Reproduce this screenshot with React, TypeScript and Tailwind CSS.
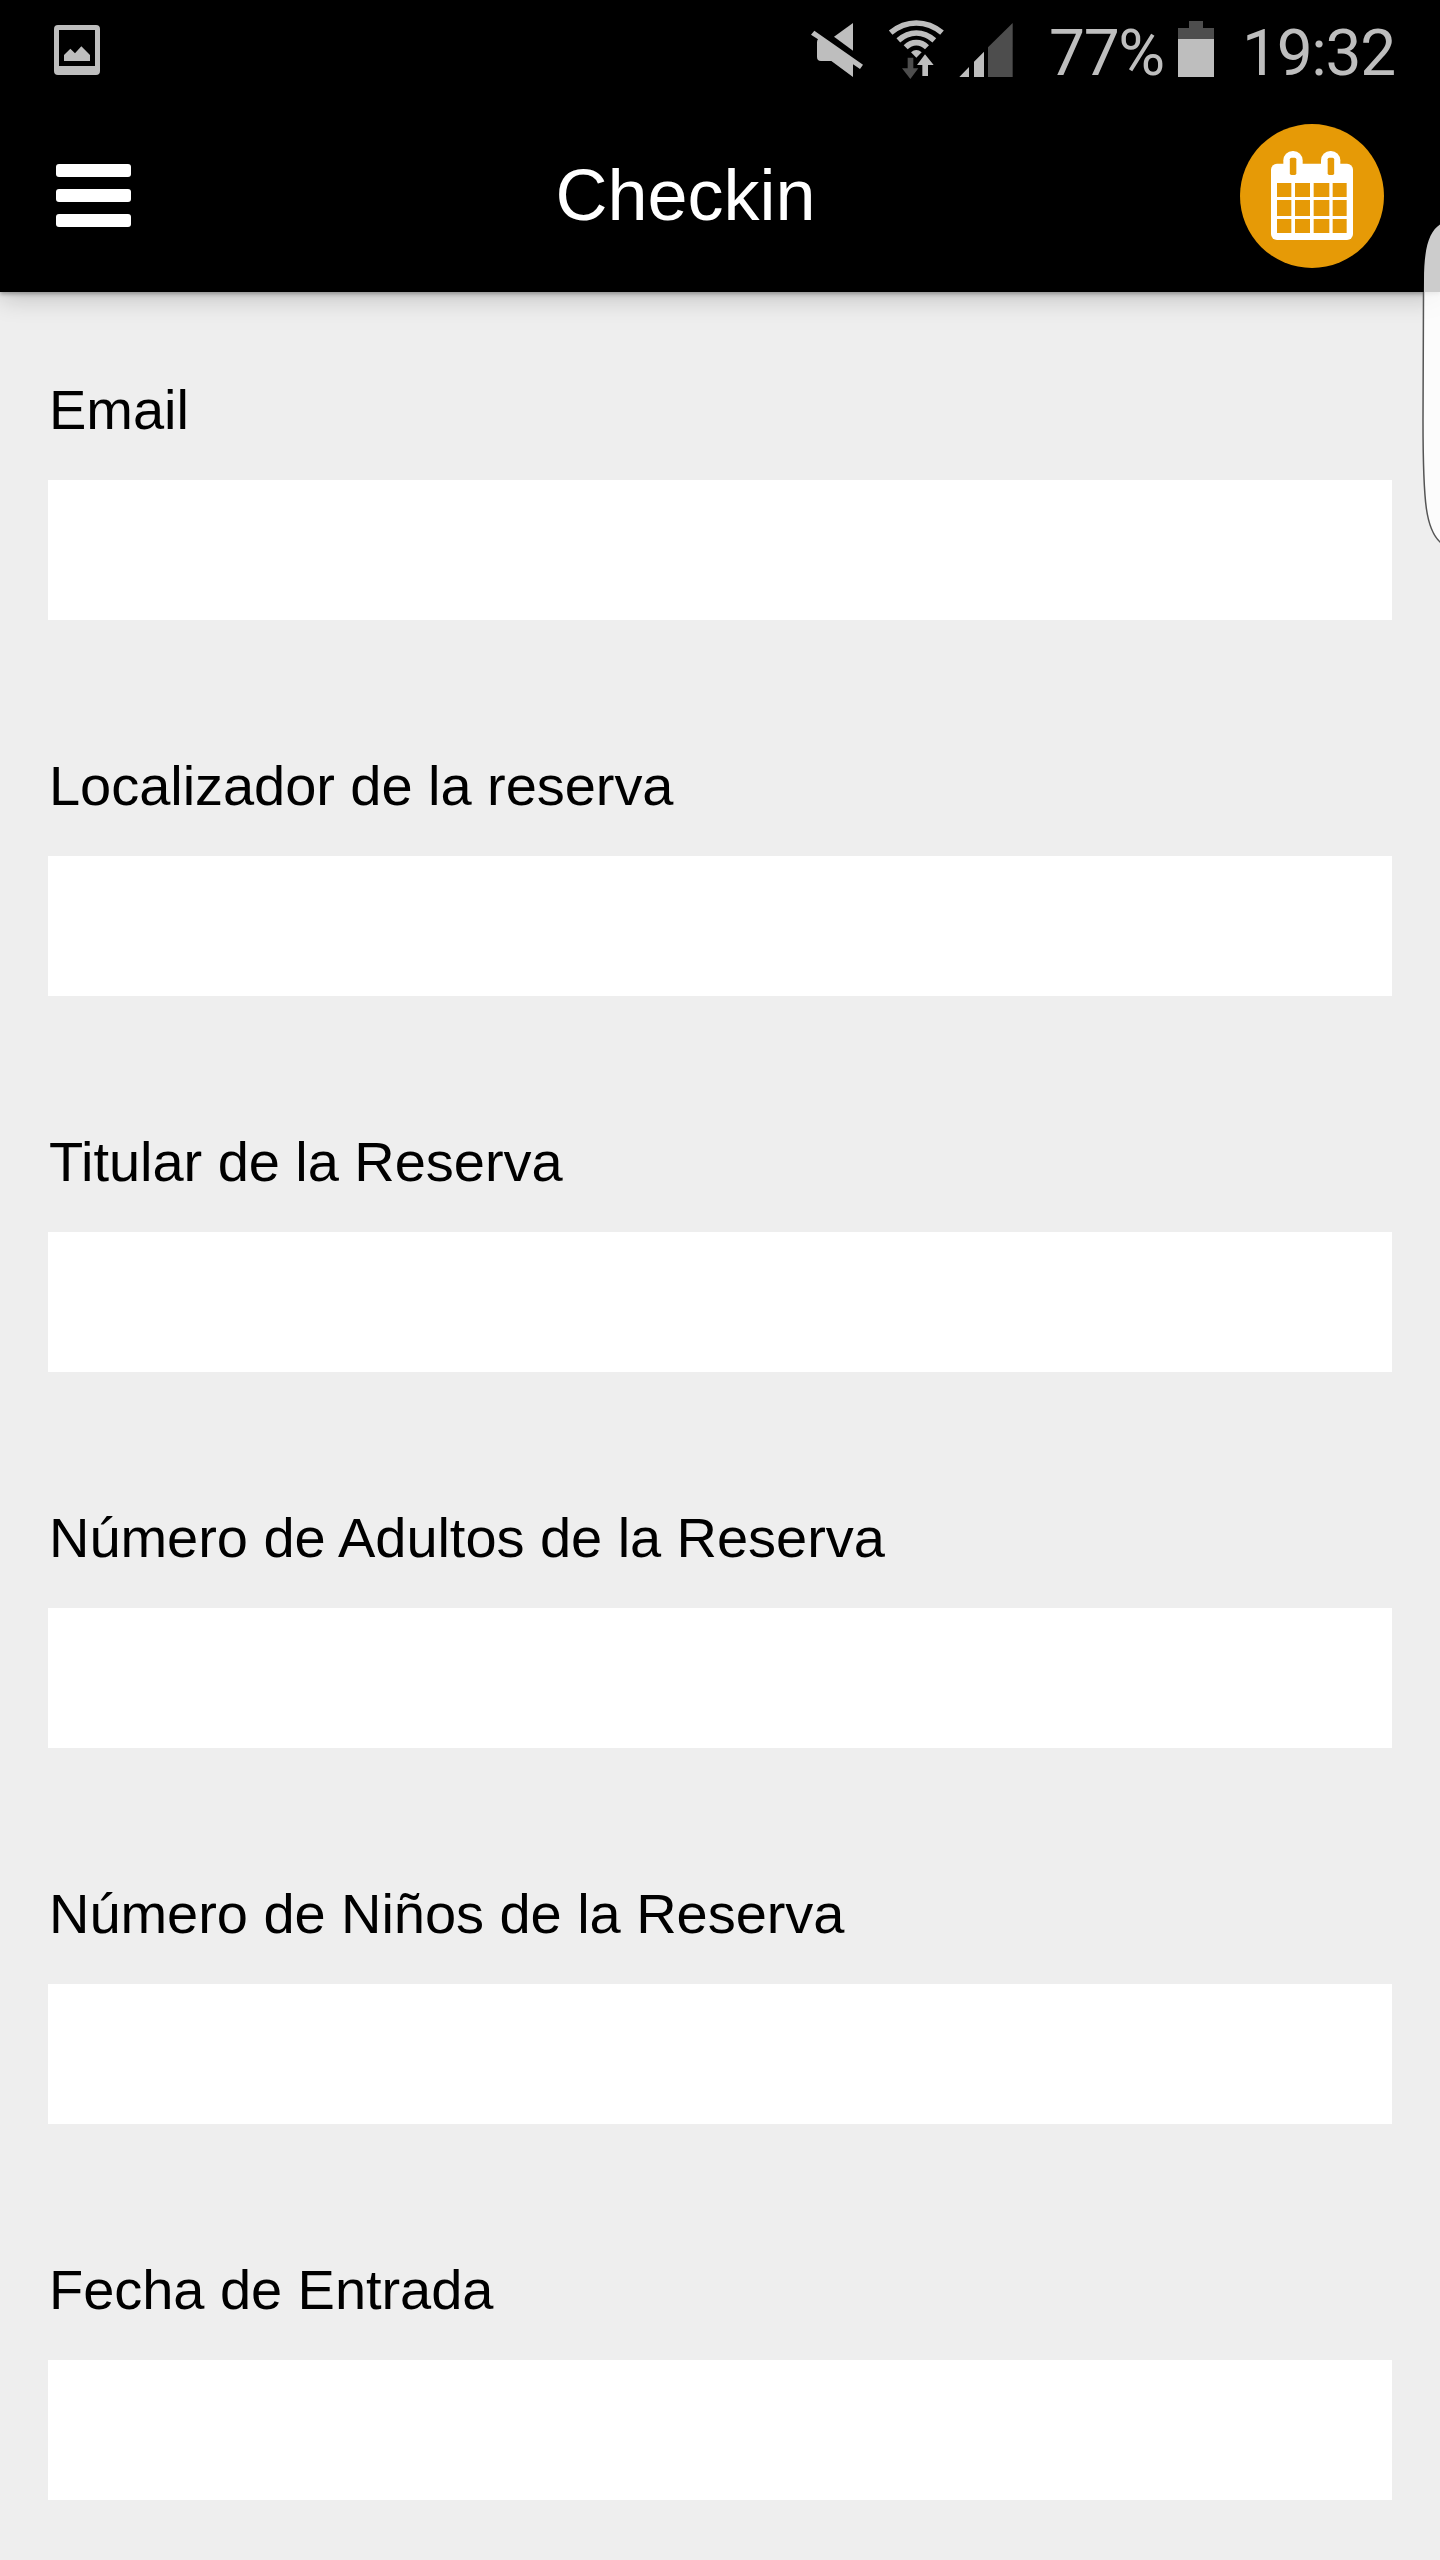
const fields = [
  { id: "email", label: "Email" },
  { id: "locator", label: "Localizador de la reserva" },
  { id: "holder", label: "Titular de la Reserva" },
  { id: "adults", label: "Número de Adultos de la Reserva" },
  { id: "children", label: "Número de Niños de la Reserva" },
  { id: "checkin-date", label: "Fecha de Entrada" },
];

const PictureIcon = () => (
  <svg viewBox="162 0 138 288" className="h-24 w-[46px]">
    <path
      fillRule="evenodd"
      fill="#bebebe"
      d="M174 75H288Q300 75 300 87V213Q300 225 288 225H174Q162 225 162 213V87Q162 75 174 75ZM177 90V198H285V90Z"
    />
    <path fill="#bebebe" d="M192 183V165L211 146L225 160L244 139L270 165V183Z" />
  </svg>
);

const MuteIcon = () => (
  <svg viewBox="60 0 162 288" className="h-24 w-[54px]">
    <path fill="#bebebe" d="M189 69V152L132 110Z" />
    <path
      fill="#bebebe"
      d="M73 92L219 194L210 207L189 193V231L124 183H93Q81 183 81 171V127Q81 121 84 118L63 104Z"
    />
  </svg>
);

const WifiIcon = () => (
  <svg viewBox="294 0 168 288" className="h-24 w-14">
    <g fill="none" stroke="#bebebe" strokeWidth="17">
      <path d="M302 98Q337 69 379 69T456 98" />
      <path d="M325 121Q350 99 379 99T433 121" />
      <path d="M347 142Q361 128 379 128T411 142" />
    </g>
    <path fill="#bebebe" d="M363 157Q379 143 395 157L379 173Z" />
    <path fill="#4d4d4d" d="M353 173H370V205H385L361 237L336 205H353Z" />
    <path
      fill="#bebebe"
      stroke="#000"
      strokeWidth="6"
      paintOrder="stroke"
      d="M405 163L431 195H414V228H397V195H381Z"
    />
  </svg>
);

const SignalIcon = () => (
  <svg viewBox="504 0 168 288" className="h-24 w-14">
    <path fill="#bebebe" d="M508 231L537 201V231ZM552 231V185L582 155V231Z" />
    <path fill="#4d4d4d" d="M594 231V142L668 69V231Z" />
  </svg>
);

const BatteryIcon = () => (
  <svg viewBox="444 0 108 288" className="h-24 w-9">
    <path fill="#4d4d4d" d="M477 63H519V84H552V117H444V84H477Z" />
    <path fill="#bebebe" d="M444 117H552V231H444Z" />
  </svg>
);

const CalendarIcon = () => (
  <svg viewBox="120 72 432 432" className="size-full">
    <rect x="213" y="191" width="246" height="229" rx="18" fill="#fff" />
    <rect x="250" y="153" width="58" height="91" rx="28" fill="#fff" />
    <rect x="363" y="153" width="58" height="91" rx="28" fill="#fff" />
    <g fill="#e69a06">
      <rect x="269.500" y="173" width="19.500" height="52" rx="5" />
      <rect x="383" y="173" width="19.500" height="52" rx="5" />
      <path d="M231 249h43v42h-43zM285 249h45v42h-45zM341 249h47v42h-47zM398 249h42v42h-42z" />
      <path d="M231 300h43v48h-43zM285 300h45v48h-45zM341 300h47v48h-47zM398 300h42v48h-42z" />
      <path d="M231 357h43v42h-43zM285 357h45v42h-45zM341 357h47v42h-47zM398 357h42v42h-42z" />
    </g>
  </svg>
);

const StatusBar = () => (
  <div className="flex h-24 items-center pl-[54px] font-['Roboto',sans-serif] text-[64px] leading-[96px] tracking-[-1.3px] text-[#bebebe]">
    <PictureIcon />
    <div className="ml-[710px] flex">
      <MuteIcon />
      <div className="ml-6">
        <WifiIcon />
      </div>
      <div className="ml-3.5">
        <SignalIcon />
      </div>
    </div>
    <span className="ml-[35px] w-[129px] pt-3 whitespace-nowrap">77%</span>
    <BatteryIcon />
    <span className="ml-[28px] pt-3 whitespace-nowrap">19:32</span>
  </div>
);

const TopBar = () => (
  <div className="flex h-[196px] items-center justify-between px-14 pt-1">
    <button type="button" aria-label="Menu" className="mb-px flex w-[75px] flex-col gap-3">
      <span className="h-[13px] rounded-[3px] bg-white" />
      <span className="h-[13px] rounded-[3px] bg-white" />
      <span className="h-[13px] rounded-[3px] bg-white" />
    </button>
    <h1 className="mb-0.5 text-[72px] leading-[82px] text-white">Checkin</h1>
    <button type="button" aria-label="Calendar" className="size-36 rounded-full bg-[#e69a06]">
      <CalendarIcon />
    </button>
  </div>
);

// Edge panel handle that sits over the right side of the screen
const EdgeHandle = () => (
  <svg viewBox="0 0 20 330" className="absolute top-[220px] right-0 h-[330px] w-5">
    <path
      fill="#fff"
      fillOpacity="0.8"
      d="M21 4C9 11 4 28 4 60L3 200C3 285 6 310 21 323Z"
    />
    <path
      fill="none"
      stroke="#555"
      strokeWidth="1.500"
      d="M3.500 72L3 200C3 285 6 310 21 323"
    />
  </svg>
);

export default function App() {
  return (
    <div className="relative h-[2560px] w-[1440px] overflow-hidden bg-[#eeeeee] font-['Liberation_Sans',Arial,sans-serif]">
      <header className="relative bg-black shadow-[0_2px_4px_rgba(0,0,0,0.3),0_6px_24px_rgba(0,0,0,0.2)]">
        <StatusBar />
        <TopBar />
      </header>
      <form className="flex flex-col gap-[120px] px-12 pt-[72px]">
        {fields.map(({ id, label }) => (
          <div key={id} className="flex flex-col">
            <label
              htmlFor={id}
              className="h-[116px] pt-[14px] pl-px text-[56px] leading-[64px] tracking-[-0.05px] text-black"
            >
              {label}
            </label>
            <input id={id} type="text" className="h-[140px] bg-white px-6 text-[56px] outline-none" />
          </div>
        ))}
      </form>
      <EdgeHandle />
    </div>
  );
}
